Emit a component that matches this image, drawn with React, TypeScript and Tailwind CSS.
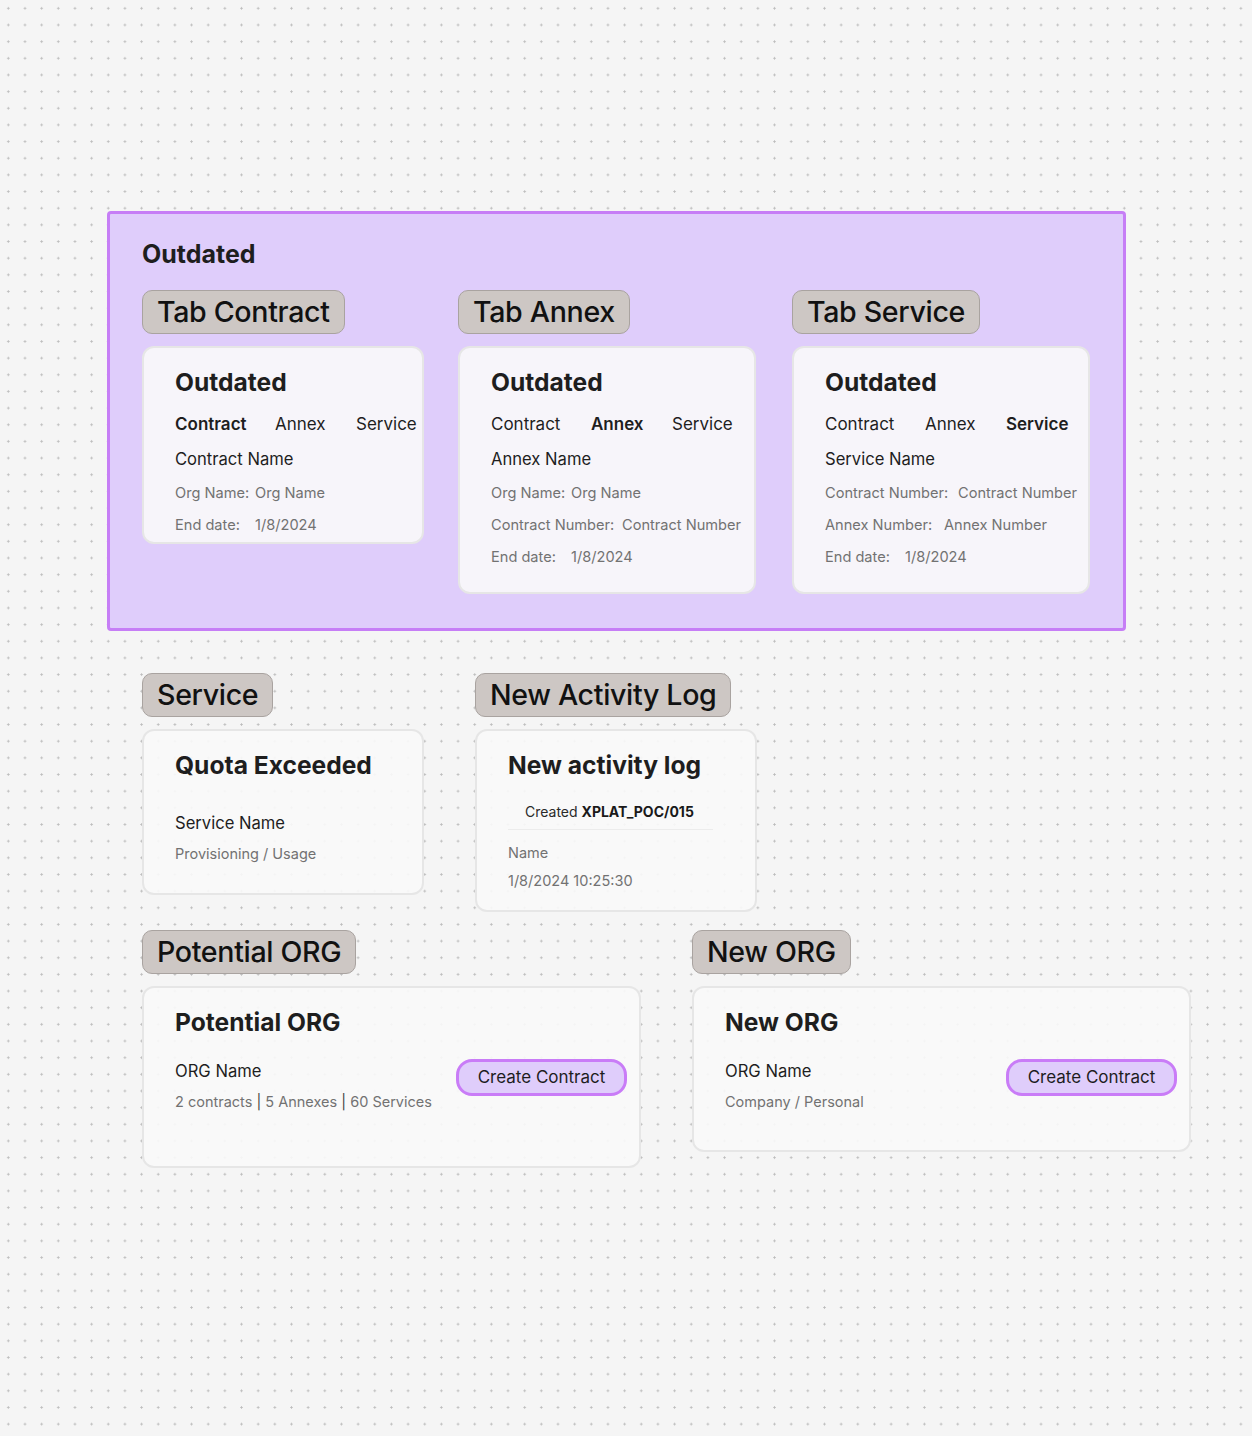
import type { JSX, ReactNode } from 'react'

type Row = { label: string; value: string; at: number }

const TABS = ['Contract', 'Annex', 'Service'] as const

function Label({ children }: { children: ReactNode }): JSX.Element {
  return (
    <div className="h-[44px] rounded-[10px] border border-[#a9a3a0] bg-[#cdc7c4] px-[14px] text-[28.6px] font-medium leading-[42px] tracking-[-0.012em] text-[#111111]">
      {children}
    </div>
  )
}

function Card({
  className,
  children,
}: {
  className: string
  children: ReactNode
}): JSX.Element {
  return (
    <div
      className={`rounded-[12px] border-2 border-[#e6e6e6] bg-[#fafafa]/90 pt-[19px] ${className}`}
    >
      {children}
    </div>
  )
}

function Title({ children }: { children: ReactNode }): JSX.Element {
  return (
    <div className="text-[24.6px] font-bold leading-[30px] text-[#1e1e1e]">
      {children}
    </div>
  )
}

function OutdatedCard({
  active,
  name,
  rows,
  className,
}: {
  active: (typeof TABS)[number]
  name: string
  rows: Row[]
  className: string
}): JSX.Element {
  return (
    <Card className={`pl-[31px] ${className}`}>
      <Title>Outdated</Title>
      <div className="mt-[15px] flex text-[17px] leading-[24px] text-[#1e1e1e]">
        {TABS.map((t) => (
          <div
            key={t}
            className={`${t === 'Contract' ? 'w-[100px]' : t === 'Annex' ? 'w-[81px]' : ''} ${t === active ? 'font-semibold' : ''}`}
          >
            {t}
          </div>
        ))}
      </div>
      <div className="mt-[11px] text-[16.6px] leading-[24px] text-[#1e1e1e]">
        {name}
      </div>
      {rows.map((r) => (
        <div
          key={r.label}
          className="mt-[12px] flex text-[14.6px] leading-[20px] text-[#727272]"
        >
          <div className="shrink-0" style={{ width: r.at }}>
            {r.label}
          </div>
          <div>{r.value}</div>
        </div>
      ))}
    </Card>
  )
}

function CreateButton(): JSX.Element {
  return (
    <button className="h-[37px] w-[171px] rounded-[16px] border-[3px] border-[#c97cf7] bg-[#dfcdfb] text-[17px] leading-[29px] text-[#1e1e1e]">
      Create Contract
    </button>
  )
}

function OrgCard({
  title,
  sub,
  className,
}: {
  title: string
  sub: ReactNode
  className: string
}): JSX.Element {
  return (
    <Card className={`w-[499px] pl-[31px] pr-[12px] ${className}`}>
      <Title>{title}</Title>
      <div className="mt-[22px] flex items-start justify-between">
        <div>
          <div className="text-[16.6px] leading-[24px] text-[#1e1e1e]">
            ORG Name
          </div>
          <div className="mt-[9px] text-[14.5px] leading-[20px] text-[#727272]">
            {sub}
          </div>
        </div>
        <CreateButton />
      </div>
    </Card>
  )
}

export default function App(): JSX.Element {
  return (
    <div className="min-h-[1436px] w-full bg-[#f5f5f5] bg-[radial-gradient(circle,#bcbcbc_0.9px,transparent_1.3px)] bg-[size:16.67px_16.67px] font-[Inter,'Liberation_Sans',sans-serif] text-[#1e1e1e]">
      <div className="pl-[107px] pt-[211px]">
        <div className="h-[420px] w-[1019px] rounded-[4px] border-[3px] border-[#c67ef6] bg-[#dfcdfb] px-[32px] pt-[25px]">
          <div className="text-[25px] font-bold leading-[30px] text-[#1e1e1e]">
            Outdated
          </div>
          <div className="mt-[21px] grid grid-cols-[316px_334px_298px] items-start">
            <div className="flex flex-col items-start gap-[12px]">
              <Label>Tab Contract</Label>
              <OutdatedCard
                className="h-[198px] w-[282px]"
                active="Contract"
                name="Contract Name"
                rows={[
                  { label: 'Org Name:', value: 'Org Name', at: 80 },
                  { label: 'End date:', value: '1/8/2024', at: 80 },
                ]}
              />
            </div>
            <div className="flex flex-col items-start gap-[12px]">
              <Label>Tab Annex</Label>
              <OutdatedCard
                className="h-[248px] w-[298px]"
                active="Annex"
                name="Annex Name"
                rows={[
                  { label: 'Org Name:', value: 'Org Name', at: 80 },
                  {
                    label: 'Contract Number:',
                    value: 'Contract Number',
                    at: 131,
                  },
                  { label: 'End date:', value: '1/8/2024', at: 80 },
                ]}
              />
            </div>
            <div className="flex flex-col items-start gap-[12px]">
              <Label>Tab Service</Label>
              <OutdatedCard
                className="h-[248px] w-[298px]"
                active="Service"
                name="Service Name"
                rows={[
                  {
                    label: 'Contract Number:',
                    value: 'Contract Number',
                    at: 133,
                  },
                  { label: 'Annex Number:', value: 'Annex Number', at: 119 },
                  { label: 'End date:', value: '1/8/2024', at: 80 },
                ]}
              />
            </div>
          </div>
        </div>

        <div className="mt-[42px] flex items-start gap-[51px] pl-[35px]">
          <div className="flex flex-col items-start gap-[12px]">
            <Label>Service</Label>
            <Card className="h-[166px] w-[282px] pl-[31px]">
              <Title>Quota Exceeded</Title>
              <div className="mt-[31px] text-[16.6px] leading-[24px]">
                Service Name
              </div>
              <div className="mt-[9px] text-[14.5px] leading-[20px] text-[#727272]">
                Provisioning / Usage
              </div>
            </Card>
          </div>
          <div className="flex flex-col items-start gap-[12px]">
            <Label>New Activity Log</Label>
            <Card className="h-[183px] w-[282px] pl-[31px]">
              <Title>New activity log</Title>
              <div className="mt-[22px] pl-[17px] text-[14px] leading-[20px] text-[#2a2a2a]">
                Created <span className="font-bold text-[#1a1a1a]">XPLAT_POC/015</span>
              </div>
              <div className="mt-[7px] h-px w-[205px] bg-[#ececec]" />
              <div className="mt-[13px] text-[14.5px] leading-[20px] text-[#727272]">
                Name
              </div>
              <div className="mt-[8px] text-[14.5px] leading-[20px] text-[#727272]">
                1/8/2024 10:25:30
              </div>
            </Card>
          </div>
        </div>

        <div className="mt-[18px] flex items-start gap-[51px] pl-[35px]">
          <div className="flex flex-col items-start gap-[12px]">
            <Label>Potential ORG</Label>
            <OrgCard
              className="h-[182px]"
              title="Potential ORG"
              sub={
                <>
                  2 contracts <span className="text-[#444]">|</span> 5 Annexes{' '}
                  <span className="text-[#444]">|</span> 60 Services
                </>
              }
            />
          </div>
          <div className="flex flex-col items-start gap-[12px]">
            <Label>New ORG</Label>
            <OrgCard
              className="h-[166px]"
              title="New ORG"
              sub="Company / Personal"
            />
          </div>
        </div>
      </div>
    </div>
  )
}
